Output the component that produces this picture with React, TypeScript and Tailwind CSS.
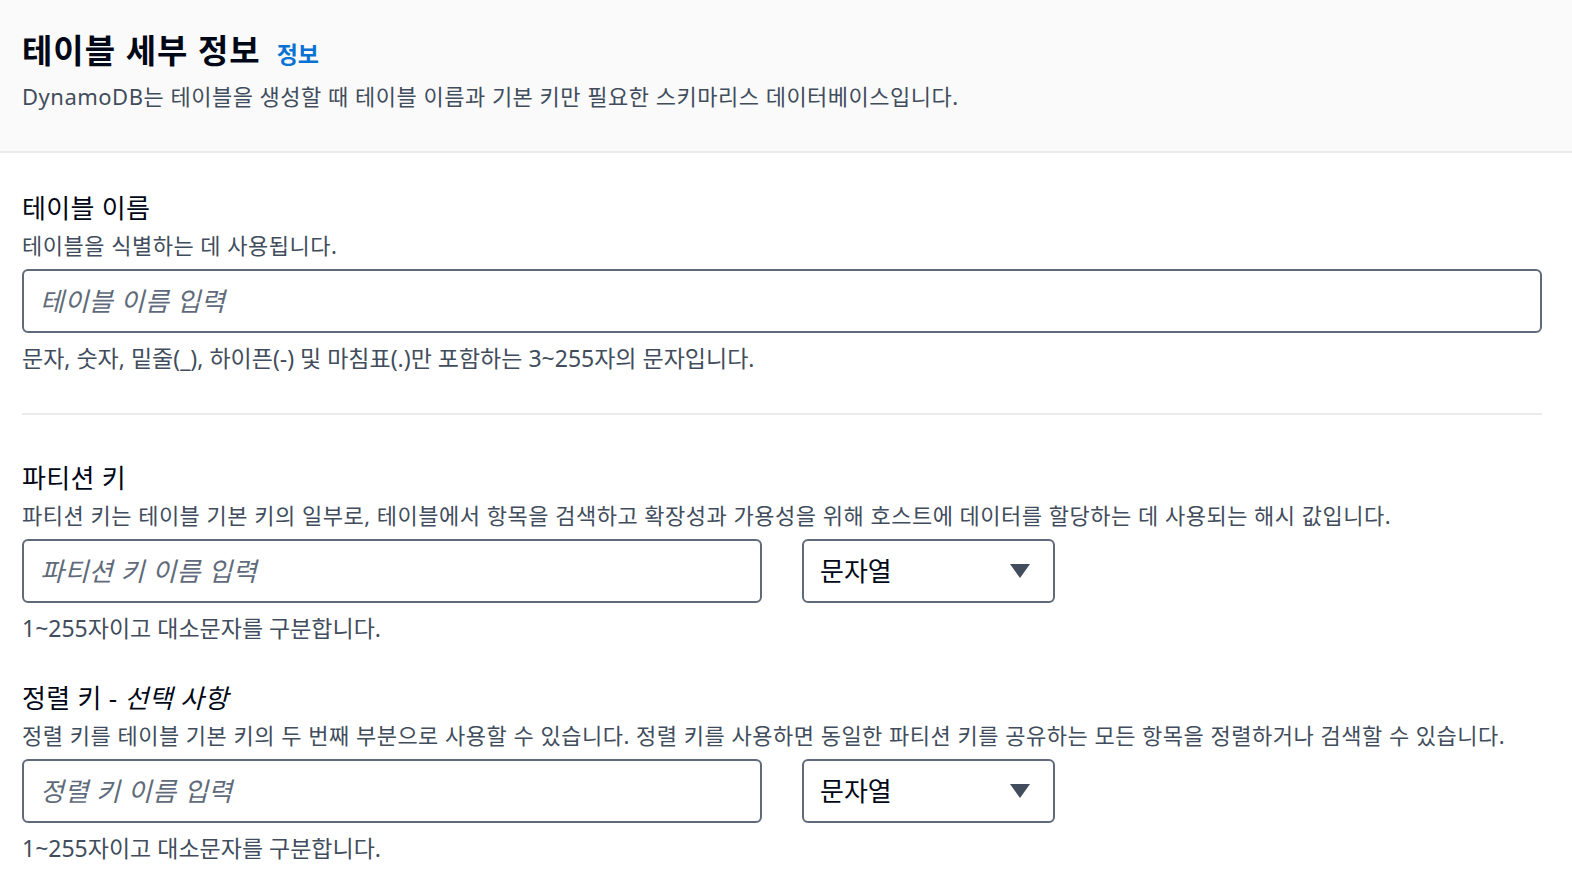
import React from 'react';

const font = { fontFamily: '"Noto Sans", "Noto Sans CJK KR", sans-serif' };

const Caret = () => (
  <svg width="22" height="16" viewBox="0 0 22 16" className="shrink-0">
    <path d="M1 1 H21 L11 15 Z" fill="#414d5c" />
  </svg>
);

const TypeSelect = () => (
  <div className="flex h-[64px] w-[253px] shrink-0 items-center justify-between rounded-[6px] border-2 border-[#5f6b7a] bg-white pl-[16px] pr-[22px] text-[26px] text-[#000716]">
    <span>문자열</span>
    <Caret />
  </div>
);

const TextInput = ({ placeholder, className }: { placeholder: string; className?: string }) => (
  <div
    className={
      'flex h-[64px] items-center rounded-[6px] border-2 border-[#5f6b7a] bg-white px-[16px] text-[26px] tracking-[0.5px] italic text-[#5f6b7a] ' +
      (className ?? '')
    }
  >
    {placeholder}
  </div>
);

const desc = 'text-[22px] tracking-[0.5px] leading-[30px] text-[#414d5c]';
const hint = 'text-[23px] leading-[30px] text-[#414d5c]';
const label = 'text-[26px] tracking-[0.3px] leading-[30px] text-[#000716]';

export default function App() {
  return (
    <div className="min-h-screen bg-white" style={font}>
      <div className="border-b-2 border-[#e9ebed] bg-[#fafafa] px-[22px] pt-[31px] pb-[40px]">
        <div className="flex items-baseline gap-[16px] leading-[40px]">
          <h1 className="text-[33px] tracking-[1px] font-bold text-[#000716]">테이블 세부 정보</h1>
          <span className="text-[23px] font-bold text-[#0972d3]">정보</span>
        </div>
        <p className={'mt-[7px] ' + desc}>
          DynamoDB는 테이블을 생성할 때 테이블 이름과 기본 키만 필요한 스키마리스 데이터베이스입니다.
        </p>
      </div>

      <div className="pl-[22px] pr-[30px] pt-[40px]">
        <div className={label}>테이블 이름</div>
        <div className={'mt-[7px] ' + desc}>테이블을 식별하는 데 사용됩니다.</div>
        <TextInput placeholder="테이블 이름 입력" className="mt-[9px] w-full" />
        <div className={'mt-[10px] ' + hint}>
          문자, 숫자, 밑줄(_), 하이픈(-) 및 마침표(.)만 포함하는 3~255자의 문자입니다.
        </div>

        <div className="mt-[40px] h-[2px] bg-[#e9ebed]" />

        <div className={'mt-[48px] ' + label}>파티션 키</div>
        <div className={'mt-[7px] ' + desc}>
          파티션 키는 테이블 기본 키의 일부로, 테이블에서 항목을 검색하고 확장성과 가용성을 위해 호스트에 데이터를 할당하는 데 사용되는 해시 값입니다.
        </div>
        <div className="mt-[9px] flex gap-[40px]">
          <TextInput placeholder="파티션 키 이름 입력" className="w-[740px]" />
          <TypeSelect />
        </div>
        <div className={'mt-[10px] ' + hint}>1~255자이고 대소문자를 구분합니다.</div>

        <div className={'mt-[40px] ' + label}>
          정렬 키 - <span className="italic">선택 사항</span>
        </div>
        <div className={'mt-[7px] ' + desc}>
          정렬 키를 테이블 기본 키의 두 번째 부분으로 사용할 수 있습니다. 정렬 키를 사용하면 동일한 파티션 키를 공유하는 모든 항목을 정렬하거나 검색할 수 있습니다.
        </div>
        <div className="mt-[9px] flex gap-[40px]">
          <TextInput placeholder="정렬 키 이름 입력" className="w-[740px]" />
          <TypeSelect />
        </div>
        <div className={'mt-[10px] ' + hint}>1~255자이고 대소문자를 구분합니다.</div>
      </div>
    </div>
  );
}
